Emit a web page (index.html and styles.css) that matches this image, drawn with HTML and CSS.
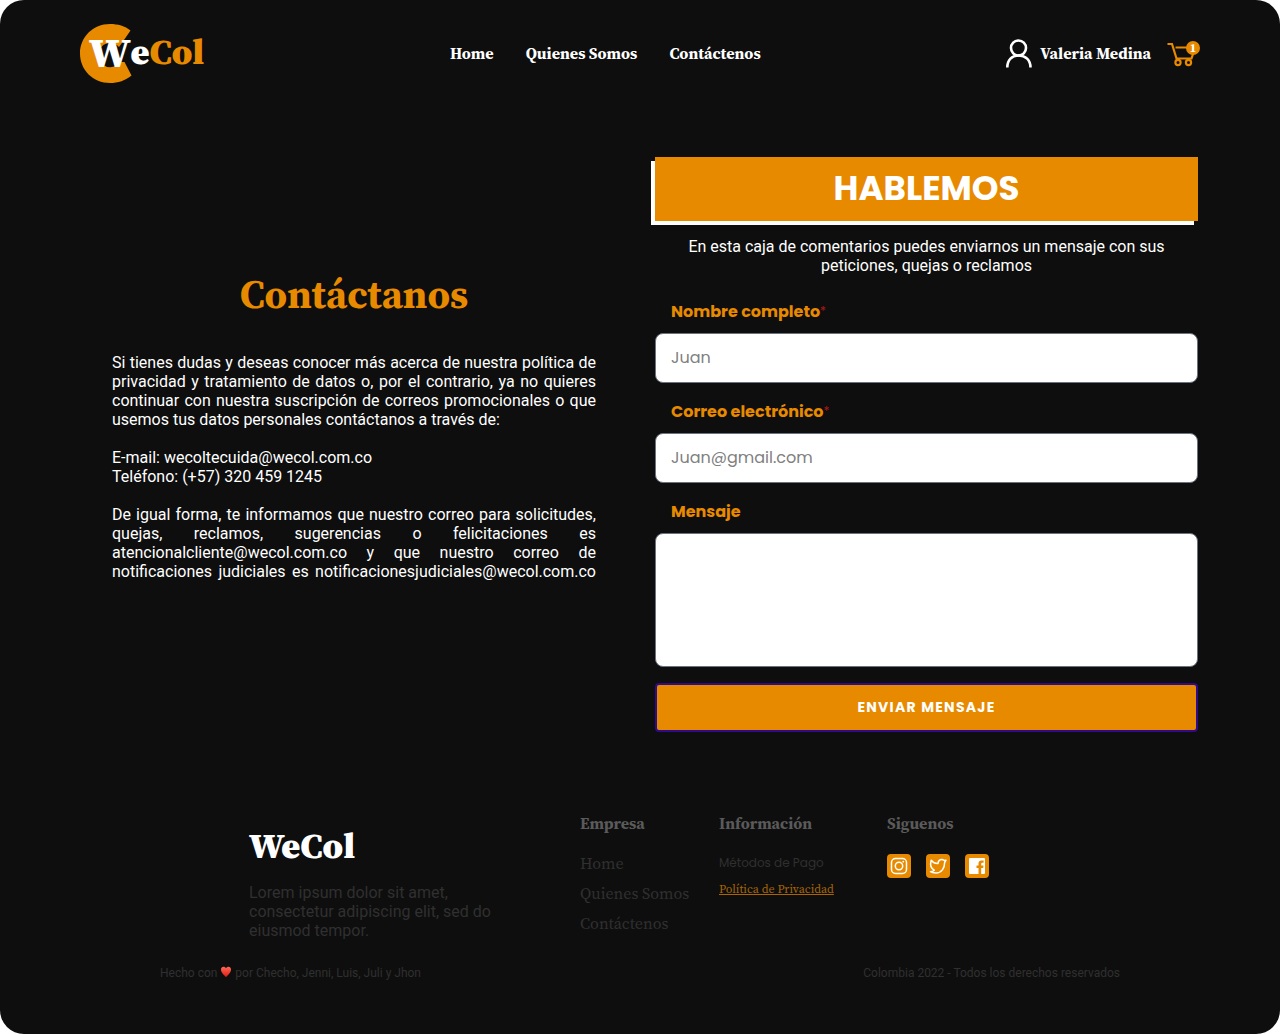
FILE: index.html
```html
<!DOCTYPE html>
<html lang="es">
<head>
<meta charset="utf-8">
<meta name="viewport" content="width=device-width, initial-scale=1">
<title>WeCol - Contáctanos</title>
<link rel="stylesheet" href="styles.css">
</head>
<body>
<div class="page">
  <header class="header">
    <a class="logo" href="#">
      <svg class="logo-mark" width="52" height="59" viewBox="0 0 52 59" aria-hidden="true">
        <path fill="#e88a00" d="M50.500 6.500C45 2 38 0 30 0C13 0 0 13 0 29.500S13 59 30 59C38 59 45.500 56.500 51.500 51.500L44.500 38L40 38A12 12 0 1 1 39 23L44 16Z"/>
      </svg>
      <span class="logo-text"><span class="initial">W</span>e<span class="accent">Col</span></span>
    </a>
    <nav class="nav">
      <a href="#">Home</a>
      <a href="#">Quienes Somos</a>
      <a href="#">Contáctenos</a>
    </nav>
    <div class="account">
      <a class="user" href="#">
        <svg width="26" height="29" viewBox="0 0 26 29" fill="none" stroke="#fff" stroke-width="2.600" aria-hidden="true">
          <circle cx="12.500" cy="9" r="7.500"/>
          <path d="M1.300 28.500C1.300 21 6 16.500 12.700 16.500S24.500 21 24.500 28.500"/>
        </svg>
        <span>Valeria Medina</span>
      </a>
      <a class="cart" href="#" aria-label="Carrito">
        <svg width="33" height="29" viewBox="0 0 33 29" fill="none" stroke="#e88a00" stroke-width="2.200" aria-hidden="true">
          <path d="M.5 5H5L9.500 19.500H24.500L27 12M8.500 8.500H20M10 19L9.500 21"/>
          <circle cx="11" cy="23.500" r="2.600"/>
          <circle cx="21.500" cy="23.500" r="2.600"/>
        </svg>
        <span class="badge">1</span>
      </a>
    </div>
  </header>

  <main class="main">
    <section class="info">
      <h1>Contáctanos</h1>
      <p>Si tienes dudas y deseas conocer más acerca de nuestra política de privacidad y tratamiento de datos o, por el contrario, ya no quieres continuar con nuestra suscripción de correos promocionales o que usemos tus datos personales contáctanos a través de:</p>
      <p>E-mail: wecoltecuida@wecol.com.co<br>Teléfono: (+57) 320 459 1245</p>
      <p class="full">De igual forma, te informamos que nuestro correo para solicitudes, quejas, reclamos, sugerencias o felicitaciones es atencionalcliente@wecol.com.co y que nuestro correo de notificaciones judiciales es notificacionesjudiciales@wecol.com.co</p>
    </section>

    <form class="form">
      <h2>HABLEMOS</h2>
      <p class="lead">En esta caja de comentarios puedes enviarnos un mensaje con sus peticiones, quejas o reclamos</p>
      <div class="field">
        <label for="name">Nombre completo<span class="req">*</span></label>
        <input id="name" type="text" placeholder="Juan">
      </div>
      <div class="field">
        <label for="email">Correo electrónico<span class="req">*</span></label>
        <input id="email" type="email" placeholder="Juan@gmail.com">
      </div>
      <div class="field">
        <label for="message">Mensaje</label>
        <textarea id="message"></textarea>
      </div>
      <button type="submit">ENVIAR MENSAJE</button>
    </form>
  </main>

  <footer class="footer">
    <div class="footer-top">
      <div class="brand">
        <strong>WeCol</strong>
        <p>Lorem ipsum dolor sit amet, consectetur adipiscing elit, sed do eiusmod tempor.</p>
      </div>
      <div class="col">
        <h3>Empresa</h3>
        <a href="#">Home</a>
        <a href="#">Quienes Somos</a>
        <a href="#">Contáctenos</a>
      </div>
      <div class="col small">
        <h3>Información</h3>
        <a class="sans" href="#">Métodos de Pago</a>
        <a class="policy" href="#">Política de Privacidad</a>
      </div>
      <div class="col">
        <h3>Siguenos</h3>
        <div class="social">
          <a href="#" aria-label="Instagram">
            <svg width="24" height="24" viewBox="0 0 24 24" fill="none" stroke="#fff" stroke-width="1.500"><rect x="4.500" y="4.500" width="15" height="15" rx="4"/><circle cx="12" cy="12" r="3.700"/><circle cx="16.300" cy="7.700" r=".9" fill="#fff" stroke="none"/></svg>
          </a>
          <a href="#" aria-label="Twitter">
            <svg width="24" height="24" viewBox="0 0 24 24" fill="none" stroke="#fff" stroke-width="1.500" stroke-linejoin="round"><path d="M12 9.500C12 6.800 14 5.200 16 5.400C17.200 5.500 17.700 6.200 18.100 6.500L20 6.200L18.600 8.700C18.700 14 15.500 19 10 19C7.500 19 5.500 18.500 4.500 17.700C6.500 17.700 7.500 17 8.300 16.200C5 14.500 4 10.500 5.200 6.300C7 8.600 9.500 9.700 12 9.500Z"/></svg>
          </a>
          <a href="#" aria-label="Facebook">
            <svg width="24" height="24" viewBox="0 0 24 24"><path fill="#fff" d="M4 5Q4 4 5 4H19Q20 4 20 5V19Q20 20 19 20H16.200V14H18.200L18.500 11.500H16.200V9.800Q16.200 8.800 17.300 8.800H18.600V6.500H16.500C14.500 6.500 13.500 7.700 13.500 9.500V11.500H11.500V14H13.500V20H5Q4 20 4 19Z"/></svg>
          </a>
        </div>
      </div>
    </div>
    <div class="footer-bottom">
      <p>Hecho con
        <svg class="heart" width="12" height="11" viewBox="0 0 12 12" role="img" aria-label="amor"><defs><linearGradient id="red" x2="0" y2="1"><stop offset="0" stop-color="#ff6a58"/><stop offset="1" stop-color="#e01b12"/></linearGradient></defs><path fill="url(#red)" d="M6 12C4 10 .5 7 .5 3.700C.5 .5 4.500 -.3 6 2.500C7.500 -.3 11.500 .5 11.500 3.700C11.500 7 8 10 6 12Z"/></svg>
        por Checho, Jenni, Luis, Juli y Jhon</p>
      <p>Colombia 2022 - Todos los derechos reservados</p>
    </div>
  </footer>
</div>
</body>
</html>
```
FILE: styles.css
```css
:root {
  --orange: #e88a00;
  --serif: "Source Serif Pro", "Source Serif 4", "Liberation Serif", serif;
  --geo: Poppins, Inter, sans-serif;
}

* {
  box-sizing: border-box;
}

body {
  margin: 0;
  background: #fff;
  color: #fff;
  font: 16px/19px Roboto, sans-serif;
}

h1, h2, h3, p {
  margin: 0;
}

a {
  color: inherit;
  text-decoration: none;
}

.page {
  min-height: 100vh;
  background: #0e0e0e;
  border-radius: 24px;
}

.header {
  display: flex;
  justify-content: space-between;
  align-items: center;
  padding: 24px 80px;
  font: bold 16px/25px var(--serif);
}

.logo {
  position: relative;
  display: flex;
  align-items: center;
  height: 59px;
  padding: 0 0 4px 9px;
}

.logo-mark {
  position: absolute;
  left: 0;
  top: 0;
}

.logo-text {
  position: relative;
  display: flex;
  align-items: center;
  font-size: 36px;
  font-weight: 900;
  line-height: 40px;
}

.initial {
  font-size: 42px;
}

.accent {
  color: var(--orange);
}

.nav {
  display: flex;
  gap: 32px;
}

.account,
.user {
  display: flex;
  align-items: center;
}

.account {
  gap: 16px;
}

.user {
  gap: 8px;
}

.cart {
  position: relative;
  display: flex;
}

.badge {
  position: absolute;
  top: 2px;
  right: 0;
  width: 14px;
  height: 14px;
  border-radius: 50%;
  background: var(--orange);
  font-size: 12px;
  line-height: 14px;
  text-align: center;
}

.main {
  display: grid;
  grid-template-columns: 484fr 543fr;
  gap: 59px;
  align-items: center;
  padding: 50px 82px 0 112px;
}

.info {
  display: grid;
  gap: 19px;
  padding-bottom: 38px;
  text-align: justify;
}

.info h1 {
  margin-bottom: 16px;
  color: var(--orange);
  font: bold 40px/48px var(--serif);
  text-align: center;
}

.info .full {
  text-align-last: justify;
}

.form {
  display: grid;
  gap: 16px;
}

.form h2 {
  padding-bottom: 2px;
  background: var(--orange);
  box-shadow: -4px 4px #fff;
  font: bold 34px/62px var(--geo);
  text-align: center;
}

.lead {
  padding: 0 24px;
  margin-bottom: 8px;
  text-align: center;
}

.field {
  display: grid;
  gap: 8px;
}

.field label {
  padding-left: 16px;
  color: var(--orange);
  font: bold 16px/26px var(--geo);
}

.req {
  color: #b01818;
  font-size: 12px;
  font-weight: 400;
  line-height: 12px;
  vertical-align: 2px;
}

.field input,
.field textarea {
  display: block;
  width: 100%;
  height: 50px;
  padding: 0 15px 2px;
  border: 1px solid #6b7280;
  border-radius: 8px;
  background: #fff;
  color: #222;
  font: 16px/24px var(--geo);
}

.field textarea {
  height: 134px;
  padding: 12px 15px;
  resize: none;
}

.field ::placeholder {
  color: #808080;
}

.form button {
  height: 49px;
  padding-bottom: 2px;
  border: 2px solid #2f0a8c;
  border-radius: 4px;
  background: var(--orange);
  color: #fff;
  font: bold 14px/20px var(--geo);
  letter-spacing: 0.09em;
}

.footer {
  padding: 80px 0 50px;
}

.footer-top {
  display: grid;
  grid-template-columns: 331fr 139fr 168fr 144fr;
  width: 782px;
  max-width: 100%;
  margin: 0 auto;
  font-family: var(--serif);
  color: #303030;
}

.brand strong {
  display: block;
  margin: 14px 0 17px;
  color: #fff;
  font-size: 36px;
  font-weight: 900;
  line-height: 40px;
}

.brand p {
  max-width: 250px;
  font-family: Roboto, sans-serif;
}

.col {
  display: flex;
  flex-direction: column;
  align-items: flex-start;
  font-size: 16px;
  line-height: 30px;
}

.col h3 {
  margin-bottom: 14px;
  color: #5a5a5a;
  font-size: 16px;
  line-height: 22px;
}

.small a {
  font-size: 12px;
  line-height: 26px;
}

.small .sans {
  padding-top: 2px;
  font-family: var(--geo);
}

.small .policy {
  color: #a86505;
  text-decoration: underline;
}

.social {
  display: flex;
  gap: 15px;
  padding-top: 6px;
}

.social a {
  display: flex;
  border-radius: 4px;
  background: var(--orange);
}

.footer-bottom {
  display: flex;
  justify-content: space-between;
  width: 960px;
  max-width: 100%;
  margin: 24px auto 0;
  color: #303030;
  font-size: 12px;
  line-height: 18px;
}
```
